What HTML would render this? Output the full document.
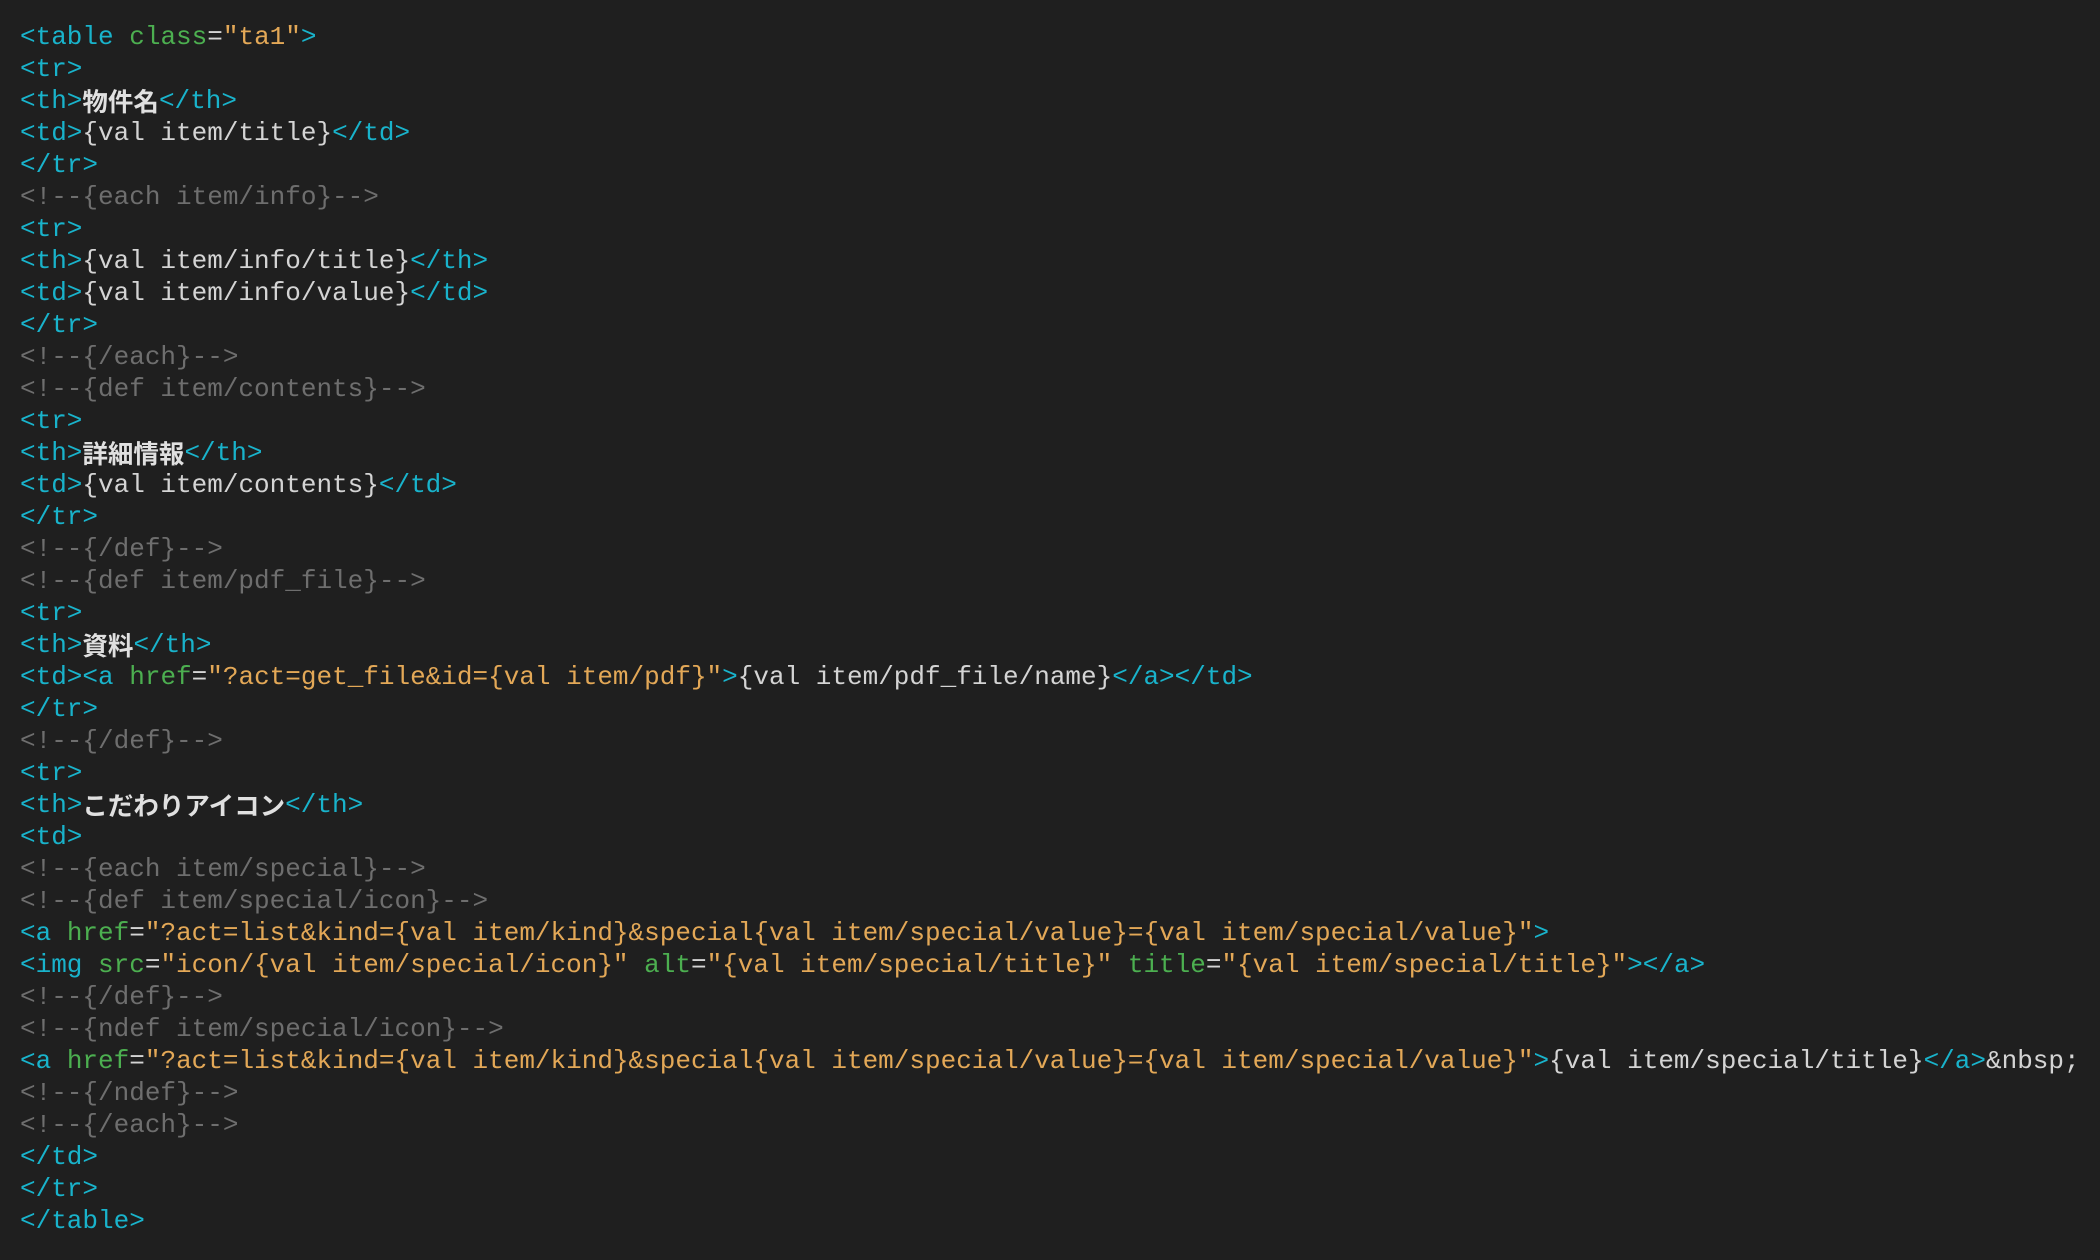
<!DOCTYPE html>
<html><head><meta charset="utf-8">
<style>
html,body{margin:0;padding:0;background:#1f1f1f;width:2100px;height:1260px;overflow:hidden}
pre{margin:0;padding:21px 0 0 20px;font-family:"Liberation Mono","Noto Sans CJK JP",monospace;font-size:26px;line-height:32px;color:#d4d4d4;white-space:pre}
.t{color:#19b3cb}.a{color:#4caf50}.s{color:#e3a857}.c{color:#6e6e6e}
.j{font-weight:bold;color:#e0e0e0;font-family:"Noto Sans CJK JP",sans-serif;display:inline-block;height:32px;line-height:32px;vertical-align:top;overflow:hidden;font-size:25.5px}
</style></head><body><pre><span class="t">&lt;table</span> <span class="a">class</span>=<span class="s">"ta1"</span><span class="t">&gt;</span>
<span class="t">&lt;tr&gt;</span>
<span class="t">&lt;th&gt;</span><span class="j">物件名</span><span class="t">&lt;/th&gt;</span>
<span class="t">&lt;td&gt;</span>{val item/title}<span class="t">&lt;/td&gt;</span>
<span class="t">&lt;/tr&gt;</span>
<span class="c">&lt;!--{each item/info}--&gt;</span>
<span class="t">&lt;tr&gt;</span>
<span class="t">&lt;th&gt;</span>{val item/info/title}<span class="t">&lt;/th&gt;</span>
<span class="t">&lt;td&gt;</span>{val item/info/value}<span class="t">&lt;/td&gt;</span>
<span class="t">&lt;/tr&gt;</span>
<span class="c">&lt;!--{/each}--&gt;</span>
<span class="c">&lt;!--{def item/contents}--&gt;</span>
<span class="t">&lt;tr&gt;</span>
<span class="t">&lt;th&gt;</span><span class="j">詳細情報</span><span class="t">&lt;/th&gt;</span>
<span class="t">&lt;td&gt;</span>{val item/contents}<span class="t">&lt;/td&gt;</span>
<span class="t">&lt;/tr&gt;</span>
<span class="c">&lt;!--{/def}--&gt;</span>
<span class="c">&lt;!--{def item/pdf_file}--&gt;</span>
<span class="t">&lt;tr&gt;</span>
<span class="t">&lt;th&gt;</span><span class="j">資料</span><span class="t">&lt;/th&gt;</span>
<span class="t">&lt;td&gt;&lt;a</span> <span class="a">href</span>=<span class="s">"?act=get_file&amp;id={val item/pdf}"</span><span class="t">&gt;</span>{val item/pdf_file/name}<span class="t">&lt;/a&gt;&lt;/td&gt;</span>
<span class="t">&lt;/tr&gt;</span>
<span class="c">&lt;!--{/def}--&gt;</span>
<span class="t">&lt;tr&gt;</span>
<span class="t">&lt;th&gt;</span><span class="j">こだわりアイコン</span><span class="t">&lt;/th&gt;</span>
<span class="t">&lt;td&gt;</span>
<span class="c">&lt;!--{each item/special}--&gt;</span>
<span class="c">&lt;!--{def item/special/icon}--&gt;</span>
<span class="t">&lt;a</span> <span class="a">href</span>=<span class="s">"?act=list&amp;kind={val item/kind}&amp;special{val item/special/value}={val item/special/value}"</span><span class="t">&gt;</span>
<span class="t">&lt;img</span> <span class="a">src</span>=<span class="s">"icon/{val item/special/icon}"</span> <span class="a">alt</span>=<span class="s">"{val item/special/title}"</span> <span class="a">title</span>=<span class="s">"{val item/special/title}"</span><span class="t">&gt;&lt;/a&gt;</span>
<span class="c">&lt;!--{/def}--&gt;</span>
<span class="c">&lt;!--{ndef item/special/icon}--&gt;</span>
<span class="t">&lt;a</span> <span class="a">href</span>=<span class="s">"?act=list&amp;kind={val item/kind}&amp;special{val item/special/value}={val item/special/value}"</span><span class="t">&gt;</span>{val item/special/title}<span class="t">&lt;/a&gt;</span>&amp;nbsp;
<span class="c">&lt;!--{/ndef}--&gt;</span>
<span class="c">&lt;!--{/each}--&gt;</span>
<span class="t">&lt;/td&gt;</span>
<span class="t">&lt;/tr&gt;</span>
<span class="t">&lt;/table&gt;</span></pre></body></html>
